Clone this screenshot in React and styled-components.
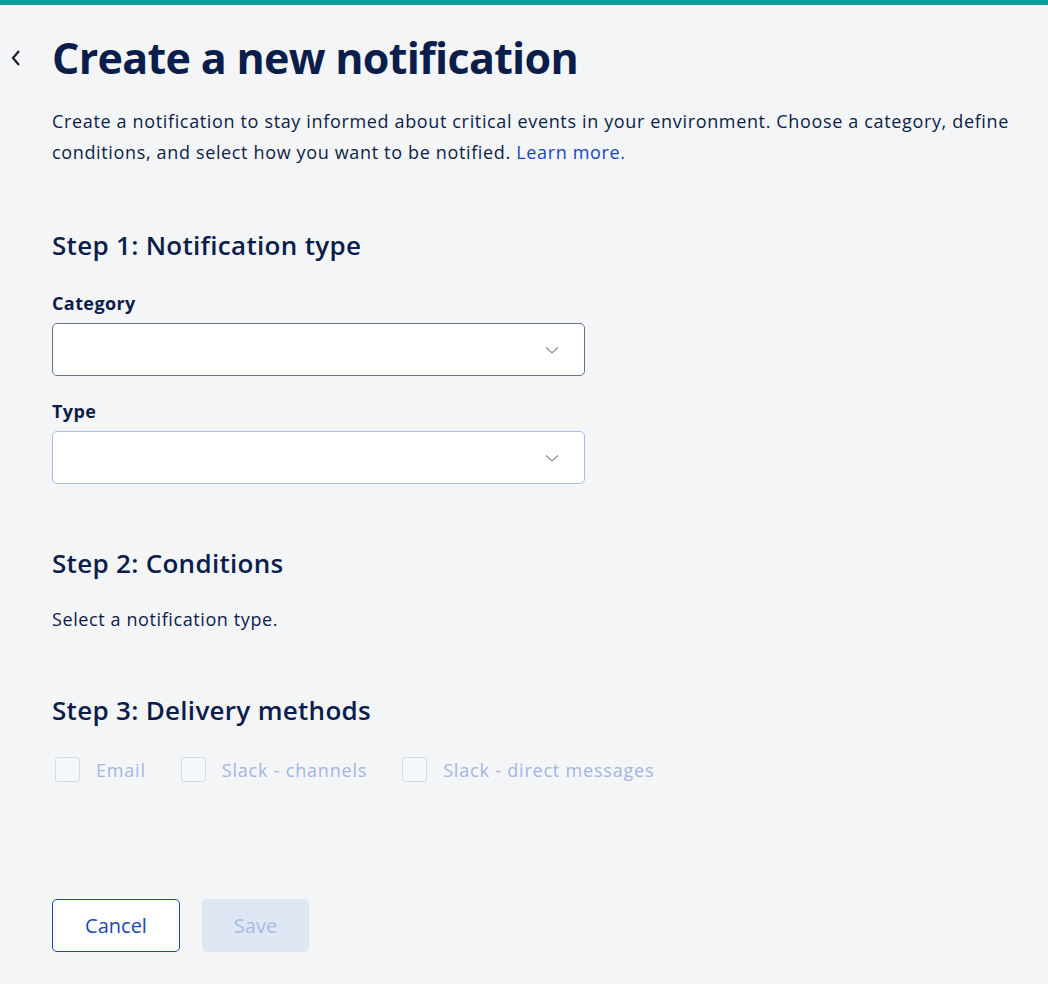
import React from "react"
import styled, { createGlobalStyle } from "styled-components"

const GlobalStyle = createGlobalStyle`
  html, body {
    margin: 0;
    padding: 0;
    background: #f4f5f7;
    font-family: "Open Sans", "Liberation Sans", sans-serif;
    color: #0b1d4a;
  }
  * { box-sizing: border-box; }
`

const Page = styled.div`
  min-height: 984px;
  border-top: 5px solid #0d9e9a;
  padding-bottom: 32px;
`

const Header = styled.div`
  display: flex;
  align-items: center;
  padding-top: 27px;
`

const BackButton = styled.button`
  width: 52px;
  height: 40px;
  display: flex;
  align-items: center;
  padding: 0 0 0 9px;
  border: 0;
  background: none;
  color: #1b1f2a;
  cursor: pointer;
`

const Title = styled.h1`
  margin: 0;
  font-size: 43px;
  line-height: 52px;
  font-weight: 700;
  letter-spacing: -0.7px;
  color: #0b1d4a;
`

const Content = styled.main`
  padding-left: 52px;
  padding-right: 16px;
`

const Intro = styled.p`
  margin: 22px 0 0;
  font-size: 18px;
  line-height: 31px;
  letter-spacing: 0.65px;
  color: #0b1d4a;
`

const Link = styled.a`
  color: #1446c0;
  text-decoration: none;
`

const StepTitle = styled.h2`
  margin: ${p => p.$top}px 0 0;
  font-size: 26px;
  font-weight: 600;
  line-height: 34px;
  letter-spacing: 0.3px;
  color: #0b1d4a;
`

const Field = styled.div`
  width: 533px;
  margin-top: ${p => p.$top}px;
`

const Label = styled.label`
  display: block;
  font-size: 18px;
  font-weight: 700;
  line-height: 24px;
  letter-spacing: 0.4px;
  margin-bottom: 8px;
`

const Select = styled.div`
  height: 53px;
  background: #fff;
  border: 1px solid ${p => (p.$active ? "#69728a" : "#aabde6")};
  border-radius: 5px;
  display: flex;
  align-items: center;
  justify-content: flex-end;
  padding-right: 24px;
  color: #8a8f9b;
`

const Hint = styled.p`
  margin: 27px 0 0;
  font-size: 18px;
  line-height: 24px;
  letter-spacing: 0.6px;
`

const Options = styled.div`
  display: flex;
  gap: 35px;
  margin-top: 30px;
  padding-left: 3px;
`

const Option = styled.label`
  display: flex;
  align-items: center;
  gap: 16px;
  font-size: 18px;
  letter-spacing: 0.8px;
  color: #a3b6e2;
`

const Box = styled.span`
  width: 25px;
  height: 25px;
  border: 1.5px solid #d3d9e8;
  border-radius: 3px;
  background: #f6f7fa;
`

const Actions = styled.div`
  display: flex;
  gap: 22px;
  margin-top: 117px;
`

const Button = styled.button`
  height: 53px;
  min-width: ${p => p.$width}px;
  border-radius: 5px;
  font-family: inherit;
  font-size: 20px;
  font-weight: 500;
  border: 1px solid ${p => (p.$primary ? "#dfe7f5" : "#1c47b5")};
  background: ${p => (p.$primary ? "#dfe7f5" : "#fff")};
  color: ${p => (p.$primary ? "#a8bbe2" : "#1c47b5")};
`

const Chevron = ({ size = 16 }) => (
  <svg width={size} height={size} viewBox="0 0 16 16" fill="none" stroke="currentColor" strokeWidth="1.2">
    <path d="M2 5.5l6 5.5 6-5.5" />
  </svg>
)

const App = () => (
  <Page>
    <GlobalStyle />
    <Header>
      <BackButton aria-label="Back">
        <svg width="14" height="18" viewBox="0 0 14 18" fill="none" stroke="currentColor" strokeWidth="2.2">
          <path d="M10 2L4 9l6 7" />
        </svg>
      </BackButton>
      <Title>Create a new notification</Title>
    </Header>
    <Content>
      <Intro>
        Create a notification to stay informed about critical events in your environment. Choose a category, define
        conditions, and select how you want to be notified. <Link href="#">Learn more.</Link>
      </Intro>

      <StepTitle $top={60}>Step 1: Notification type</StepTitle>
      <Field $top={29}>
        <Label>Category</Label>
        <Select $active>
          <Chevron />
        </Select>
      </Field>
      <Field $top={23}>
        <Label>Type</Label>
        <Select>
          <Chevron />
        </Select>
      </Field>

      <StepTitle $top={62}>Step 2: Conditions</StepTitle>
      <Hint>Select a notification type.</Hint>

      <StepTitle $top={62}>Step 3: Delivery methods</StepTitle>
      <Options>
        <Option><Box />Email</Option>
        <Option><Box />Slack - channels</Option>
        <Option><Box />Slack - direct messages</Option>
      </Options>

      <Actions>
        <Button $width={128}>Cancel</Button>
        <Button $primary $width={107}>Save</Button>
      </Actions>
    </Content>
  </Page>
)

export default App
